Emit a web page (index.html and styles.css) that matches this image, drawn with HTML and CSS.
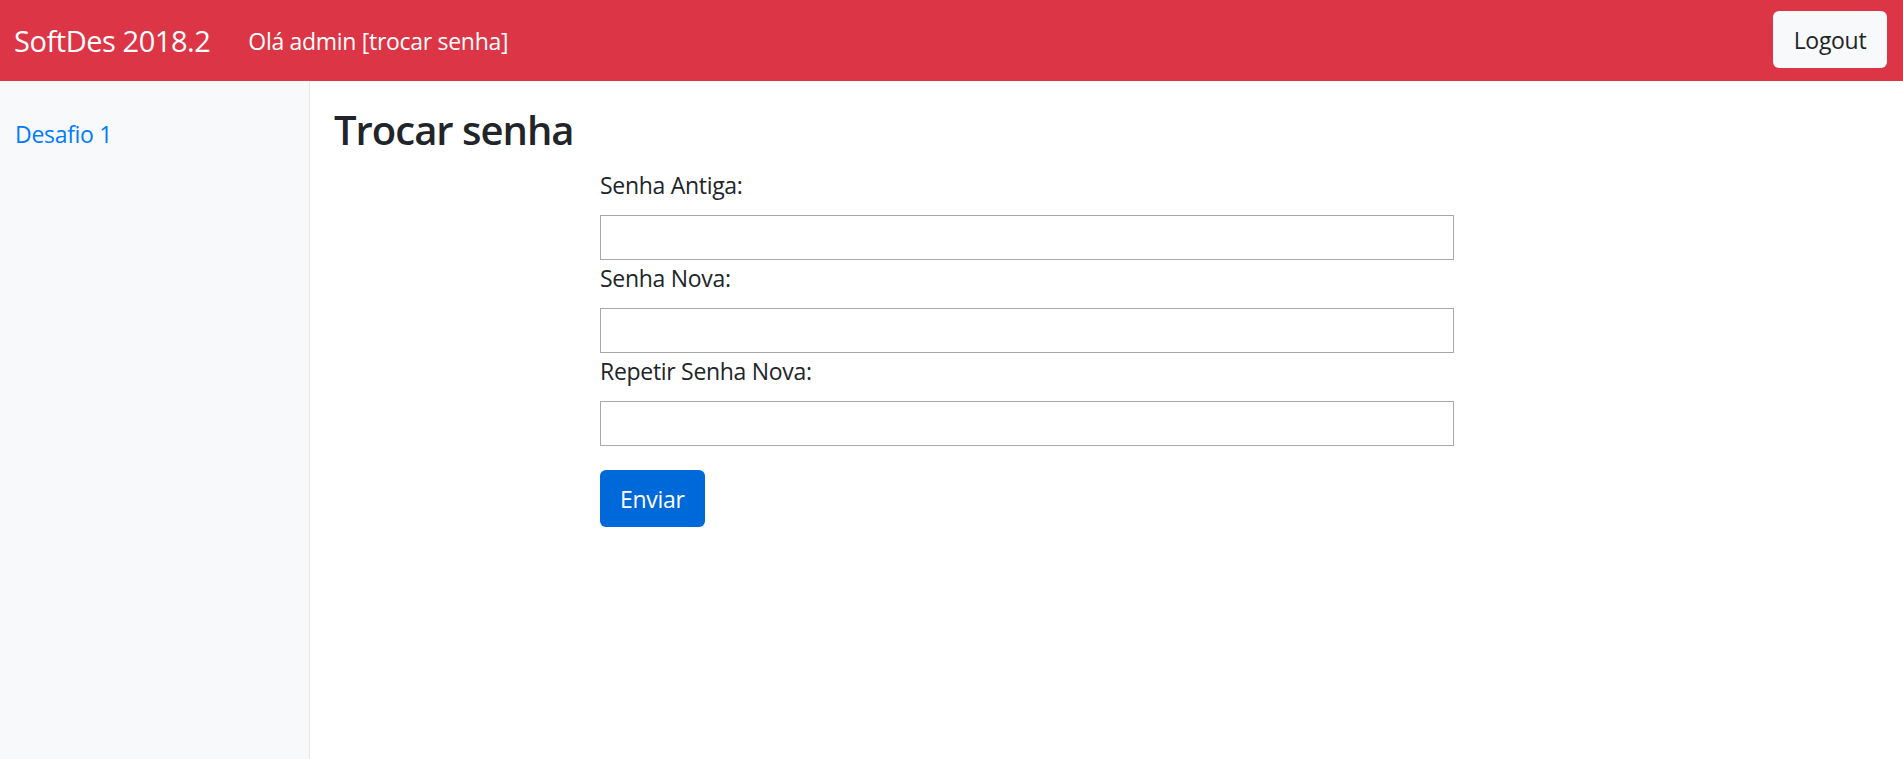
FILE: index.html
```html
<!DOCTYPE html>
<html lang="pt-BR">
<head>
<meta charset="utf-8">
<title>Trocar senha - SoftDes 2018.2</title>
<link rel="stylesheet" href="styles.css">
</head>
<body>
<header class="navbar">
  <a class="brand" href="#">SoftDes 2018.2</a>
  <span class="greeting">Olá admin <a class="greeting-link" href="#">[trocar senha]</a></span>
  <button class="logout" type="button">Logout</button>
</header>
<div class="layout">
  <aside class="sidebar">
    <a class="side-link" href="#">Desafio 1</a>
  </aside>
  <main class="main">
    <h1 class="title">Trocar senha</h1>
    <form class="form">
      <label class="label" for="old">Senha Antiga:</label>
      <input class="input" id="old" type="password">
      <label class="label" for="new">Senha Nova:</label>
      <input class="input" id="new" type="password">
      <label class="label" for="rep">Repetir Senha Nova:</label>
      <input class="input" id="rep" type="password">
      <div class="actions">
        <button class="submit" type="submit">Enviar</button>
      </div>
    </form>
  </main>
</div>
</body>
</html>
```
FILE: styles.css
```css
html, body {
  margin: 0;
  padding: 0;
}
body {
  font-family: "Open Sans", "Noto Sans", sans-serif;
  color: #212529;
  background: #fff;
}
.navbar {
  height: 81px;
  box-sizing: border-box;
  background: #dc3545;
  display: flex;
  align-items: center;
  padding: 0 16px 0 14px;
}
.brand {
  font-size: 29px;
  letter-spacing: -0.45px;
  line-height: 45px;
  color: #fff;
  text-decoration: none;
  margin-right: 38px;
}
.greeting {
  font-size: 23px;
  letter-spacing: -0.3px;
  line-height: 36px;
  color: #fff;
}
.greeting-link {
  color: #fff;
  text-decoration: none;
}
.logout {
  margin-left: auto;
  margin-top: -2px;
  width: 114px;
  height: 57px;
  background: #f8f9fa;
  border: 0;
  border-radius: 6px;
  font-family: inherit;
  font-size: 23px;
  letter-spacing: -0.3px;
  color: #212529;
  padding: 0;
}
.layout {
  display: flex;
  min-height: calc(100vh - 81px);
}
.sidebar {
  width: 310px;
  flex: none;
  background: #f8f9fa;
  border-right: 1px solid #e6e7e8;
  padding: 35px 0 0 15px;
  box-sizing: border-box;
}
.side-link {
  font-size: 23px;
  letter-spacing: -0.3px;
  line-height: 36px;
  color: #007bff;
  text-decoration: none;
}
.main {
  flex: 1;
  padding: 24px 24px 0 24px;
}
.title {
  margin: 0 0 12px 0;
  font-size: 40px;
  letter-spacing: -1px;
  line-height: 50px;
  font-weight: 600;
}
.form {
  margin-left: 266px;
  width: 854px;
  display: flex;
  flex-direction: column;
}
.label {
  font-size: 23px;
  letter-spacing: -0.3px;
  line-height: 36px;
  margin-bottom: 12px;
}
.input {
  height: 45px;
  box-sizing: border-box;
  border: 1px solid #a9a9a9;
  border-radius: 0;
  font-family: inherit;
  font-size: 20px;
  padding: 1px 3px;
  margin: 0;
}
.actions {
  margin-top: 24px;
}
.submit {
  height: 57px;
  padding: 0 20px;
  background: #0069d9;
  color: #fff;
  border: 0;
  border-radius: 6px;
  font-family: inherit;
  font-size: 23px;
  letter-spacing: -0.3px;
}
```
